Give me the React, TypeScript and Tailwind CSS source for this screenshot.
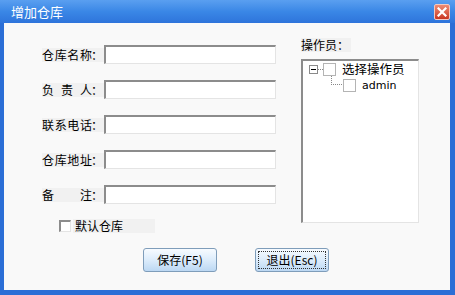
import { ReactNode } from "react";

const cjk = { fontFamily: '"Noto Sans CJK SC", "Liberation Sans", sans-serif' };

const sunken =
  "border-t-2 border-l-2 border-r border-b border-t-[#8c8c8c] border-l-[#8c8c8c] border-r-[#e4e4e4] border-b-[#e4e4e4] bg-white";

const fields: string[][] = [
  ["仓", "库", "名", "称", "："],
  ["负", "责", "人", "："],
  ["联", "系", "电", "话", "："],
  ["仓", "库", "地", "址", "："],
  ["备", "注", "："],
];

const FieldRow = ({ chars }: { chars: string[] }): ReactNode => {
  const label = chars.slice(0, -1);
  return (
    <div className="flex h-[19px] items-center">
      <div className="flex h-[14px] w-[62px] items-center bg-[#f1f1f1] text-[12px] leading-none text-black">
        <div className="flex w-[50px] justify-between">
          {label.map((c, i) => (
            <span key={i}>{c}</span>
          ))}
        </div>
        <span className="ml-[-1px]">：</span>
      </div>
      <div className={`h-[19px] w-[172px] ${sunken}`} />
    </div>
  );
};

const Button = ({ label, focused }: { label: string; focused?: boolean }): ReactNode => (
  <button
    className="flex h-[24px] w-[74px] items-center justify-center rounded-[3px] border border-[#7f9dba] bg-gradient-to-b from-[#f7fbff] via-[#dcecfb] to-[#bcd8f3] p-[2px] text-[12px] text-black"
    style={cjk}>
    <span
      className={`flex h-full w-full items-center justify-center ${focused ? "border border-dotted border-[#333]" : ""}`}>
      {label}
    </span>
  </button>
);

export default function App() {
  return (
    <div className="flex h-[295px] w-[455px] flex-col bg-[#2b6ed6]" style={cjk}>
      {/* title bar */}
      <div className="flex h-[23px] items-center justify-between bg-gradient-to-b from-[#5a9ff0] via-[#3a87e6] to-[#2e74db] pl-[11px] pr-[5px]">
        <span className="text-[13px] leading-none text-white">增加仓库</span>
        <div className="flex h-[16px] w-[16px] items-center justify-center rounded-[2px] border border-[#f3c8bf] bg-gradient-to-b from-[#ee8b73] to-[#c8341f]">
          <svg width="10" height="10" viewBox="0 0 10 10">
            <path d="M1.5 1.5 L8.5 8.5 M8.5 1.5 L1.5 8.5" stroke="white" strokeWidth="2.2" strokeLinecap="square" />
          </svg>
        </div>
      </div>

      {/* body */}
      <div className="mb-[5px] ml-[4px] mr-[5px] flex flex-1 flex-col bg-[#f9f9f9]">
        <div className="flex h-[225px]">
          {/* form */}
          <div className="flex flex-col pl-[38px] pt-[22px]">
            <div className="flex flex-col gap-[16px]">
              {fields.map((f, i) => (
                <FieldRow key={i} chars={f} />
              ))}
            </div>
            <div className="ml-[17px] mt-[15px] flex items-center">
              <div className="h-[12px] w-[12px] border-t-2 border-l-2 border-r border-b border-t-[#8c8c8c] border-l-[#8c8c8c] border-r-[#e4e4e4] border-b-[#e4e4e4] bg-white" />
              <div className="ml-[2px] flex h-[14px] w-[82px] items-center bg-[#f1f1f1] pl-[2px] text-[12px] leading-none text-black">
                默认仓库
              </div>
            </div>
          </div>

          {/* operators */}
          <div className="ml-[25px] flex flex-col pt-[15px]">
            <div className="flex h-[14px] w-[50px] items-center bg-[#f1f1f1] text-[12px] leading-none text-black">
              操作员：
            </div>
            <div className={`mt-[7px] h-[164px] w-[118px] ${sunken} pl-[6px] pt-[1px]`}>
              <div className="flex h-[14px] items-center">
                <div className="flex h-[9px] w-[9px] items-center justify-center border border-[#8a8a8a] bg-white">
                  <div className="h-px w-[5px] bg-black" />
                </div>
                <div className="w-[5px] border-t border-dotted border-[#888]" />
                <div className="h-[13px] w-[13px] border border-[#b4b4b4] bg-white" />
                <span className="ml-[6px] text-[12.5px] leading-none text-black">选择操作员</span>
              </div>
              <div className="flex h-[15px] items-start">
                <div className="ml-[22px] h-[9px] w-[11px] border-b border-l border-dotted border-[#888]" />
                <div className="ml-[1px] mt-[3px] h-[13px] w-[13px] border border-[#b4b4b4] bg-white" />
                <span
                  className="ml-[6px] mt-[3px] text-[11px] leading-[13px] text-black"
                  style={{ fontFamily: '"DejaVu Sans", sans-serif' }}>
                  admin
                </span>
              </div>
            </div>
          </div>
        </div>

        {/* buttons */}
        <div className="flex gap-[38px] pl-[139px]">
          <Button label="保存(F5)" />
          <Button label="退出(Esc)" focused />
        </div>
      </div>
    </div>
  );
}
